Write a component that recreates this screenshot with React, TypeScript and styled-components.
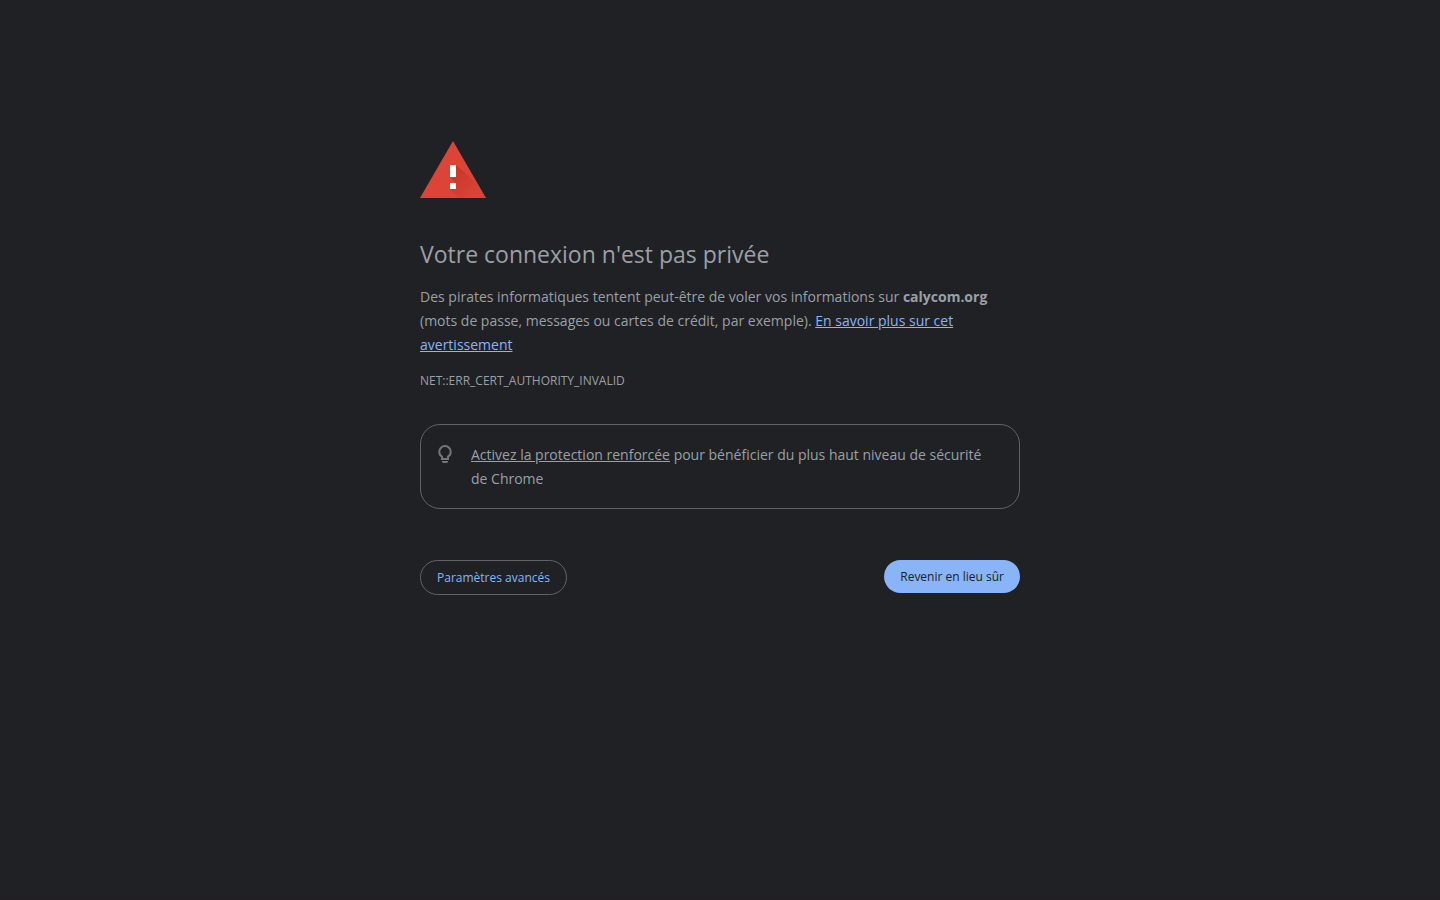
import React from "react";
import styled, { createGlobalStyle } from "styled-components";

const GlobalStyle = createGlobalStyle`
  body {
    margin: 0;
    background: #202124;
    color: #9aa0a6;
    font-family: "Open Sans", "Noto Sans", sans-serif;
    font-size: 14px;
    line-height: 24px;
  }
`;

const Page = styled.div`
  box-sizing: border-box;
  min-height: 100vh;
  padding: 140px 24px 24px;
  border-bottom: 4px solid #211e24;
`;

const Content = styled.main`
  max-width: 600px;
  margin: 0 auto;
`;

const WarningIcon = styled.svg`
  display: block;
  width: 66px;
  height: 58px;
`;

const Title = styled.h1`
  margin: 40px 0 15px;
  font-size: 23px;
  font-weight: 400;
  line-height: 32px;
`;

const Message = styled.p`
  margin: 0;
`;

const TextLink = styled.a<{ $plain?: boolean }>`
  color: ${(p) => (p.$plain ? "inherit" : "#8ab4f8")};
  text-decoration: underline;
`;

const ErrorCode = styled.div`
  margin-top: 12px;
  font-size: 12px;
`;

const Tip = styled.section`
  display: flex;
  align-items: flex-start;
  gap: 14px;
  margin-top: 31px;
  padding: 18px 24px 17px 12px;
  border: 1px solid #5f6368;
  border-radius: 20px;
`;

const BulbIcon = styled.svg`
  flex: none;
  width: 24px;
  height: 24px;
`;

const Actions = styled.div`
  display: flex;
  flex-wrap: wrap;
  align-items: flex-start;
  justify-content: space-between;
  gap: 12px;
  margin-top: 51px;
`;

const Button = styled.button<{ $primary?: boolean }>`
  padding: 8px 16px;
  border: ${(p) => (p.$primary ? "0" : "1px solid #5f6368")};
  border-radius: 20px;
  background: ${(p) => (p.$primary ? "#8ab4f8" : "transparent")};
  color: ${(p) => (p.$primary ? "#202124" : "#8ab4f8")};
  font-family: inherit;
  font-size: 12px;
  line-height: 17px;
  cursor: pointer;
`;

export default function App() {
  return (
    <>
      <GlobalStyle />
      <Page>
        <Content>
          <WarningIcon viewBox="0 0 66 58" aria-hidden="true">
            <defs>
              <linearGradient id="shade" x1="0" y1="0" x2="1" y2="1">
                <stop offset="0" stopColor="#a52714" stopOpacity="0.5" />
                <stop offset="0.75" stopColor="#a52714" stopOpacity="0.03" />
              </linearGradient>
            </defs>
            <path fill="#db4437" d="M33 1 66 58H0z" />
            <path fill="url(#shade)" d="M36 25 57 43 66 58H39L30 49l6-6-6-6 6-1z" />
            <path fill="#fff" d="M30 25h6v12h-6zM30 43h6v6h-6z" />
          </WarningIcon>
          <Title>Votre connexion n'est pas privée</Title>
          <Message>
            Des pirates informatiques tentent peut-être de voler vos informations sur{" "}
            <strong>calycom.org</strong> (mots de passe, messages ou cartes de crédit, par
            exemple). <TextLink href="#details">En savoir plus sur cet avertissement</TextLink>
          </Message>
          <ErrorCode>NET::ERR_CERT_AUTHORITY_INVALID</ErrorCode>
          <Tip>
            <BulbIcon viewBox="0 0 24 24" aria-hidden="true">
              <path
                fill="none"
                stroke="#757575"
                strokeWidth="2"
                d="M9 16v-2.300C7.200 12.700 6.300 11 6.300 8.700a5.700 5.700 0 0 1 11.400 0c0 2.300-.9 4-2.700 5V16z"
              />
              <path fill="#757575" d="M9 18h6v1l-1 1h-4l-1-1z" />
            </BulbIcon>
            <Message>
              <TextLink $plain href="#protection">Activez la protection renforcée</TextLink>{" "}
              pour bénéficier du plus haut niveau de sécurité de Chrome
            </Message>
          </Tip>
          <Actions>
            <Button type="button">Paramètres avancés</Button>
            <Button type="button" $primary>Revenir en lieu sûr</Button>
          </Actions>
        </Content>
      </Page>
    </>
  );
}
